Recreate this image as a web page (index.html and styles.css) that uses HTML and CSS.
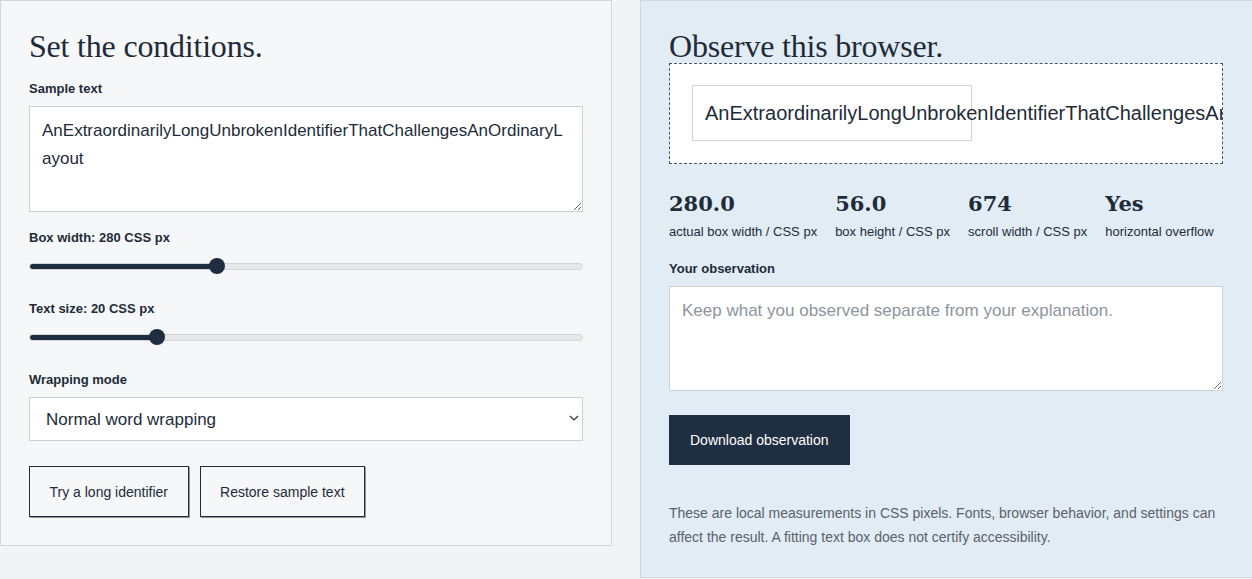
FILE: index.html
```html
<!DOCTYPE html>
<html lang="en">
<head>
    <meta charset="UTF-8">
    <meta name="viewport" content="width=device-width, initial-scale=1.0">
    <title>Text Box Overflow Lab</title>
    <link rel="stylesheet" href="styles.css">
</head>
<body>

    <div class="layout">
        <!-- Controls -->
        <section class="panel controls">
            <h2>Set the conditions.</h2>

            <label class="field-label" for="sample-text">Sample text</label>
            <textarea id="sample-text" class="sample-text">AnExtraordinarilyLongUnbrokenIdentifierThatChallengesAnOrdinaryLayout</textarea>

            <label class="field-label spaced" for="box-width">Box width: 280 CSS px</label>
            <input type="range" id="box-width" class="range" min="160" max="520" value="280" style="--fill: 187px">

            <label class="field-label spaced" for="text-size">Text size: 20 CSS px</label>
            <input type="range" id="text-size" class="range" min="12" max="48" value="20" style="--fill: 128px">

            <label class="field-label spaced" for="wrap-mode">Wrapping mode</label>
            <div class="select-wrap">
                <select id="wrap-mode" class="select">
                    <option>Normal word wrapping</option>
                    <option>Break long words</option>
                    <option>No wrapping</option>
                </select>
                <svg class="chevron" width="10" height="6" viewBox="0 0 10 6">
                    <path d="M1 1l4 4 4-4" fill="none" stroke="#333" stroke-width="1.2"/>
                </svg>
            </div>

            <div class="button-row">
                <button class="outline-btn">Try a long identifier</button>
                <button class="outline-btn">Restore sample text</button>
            </div>
        </section>

        <!-- Results -->
        <section class="panel results">
            <h2>Observe this browser.</h2>

            <div class="stage">
                <div class="test-box">AnExtraordinarilyLongUnbrokenIdentifierThatChallengesAnOrdinaryLayout</div>
            </div>

            <div class="metrics">
                <div class="metric">
                    <div class="metric-value">280.0</div>
                    <div class="metric-label">actual box width / CSS px</div>
                </div>
                <div class="metric">
                    <div class="metric-value">56.0</div>
                    <div class="metric-label">box height / CSS px</div>
                </div>
                <div class="metric">
                    <div class="metric-value">674</div>
                    <div class="metric-label">scroll width / CSS px</div>
                </div>
                <div class="metric">
                    <div class="metric-value">Yes</div>
                    <div class="metric-label">horizontal overflow</div>
                </div>
            </div>

            <label class="field-label obs-label" for="observation">Your observation</label>
            <textarea id="observation" class="observation" placeholder="Keep what you observed separate from your explanation."></textarea>

            <button class="dark-btn">Download observation</button>

            <p class="note">These are local measurements in CSS pixels. Fonts, browser behavior, and settings can affect the result. A fitting text box does not certify accessibility.</p>
        </section>
    </div>

</body>
</html>
```

FILE: styles.css
```css
body {
    margin: 0;
    font-family: "Liberation Sans", Arial, sans-serif;
    color: #1e2b38;
    background-color: #f1f4f6;
    overflow: hidden;
}

.layout {
    display: grid;
    grid-template-columns: 612px 620px;
    column-gap: 28px;
    align-items: start;
}

.panel {
    display: flex;
    flex-direction: column;
    align-items: flex-start;
    padding: 28px;
    border: 1px solid #d2d7d9;
}

.controls {
    background-color: #f5f7f9;
}

.results {
    background-color: #e2ecf5;
    border-right: none;
}

h2 {
    margin: 0;
    font-family: Georgia, "Liberation Serif", serif;
    font-size: 32px;
    line-height: 34px;
    font-weight: normal;
    letter-spacing: -0.2px;
    color: #1e2b38;
}

.controls h2 {
    margin-bottom: 18px;
}

.field-label {
    display: block;
    font-size: 13px;
    line-height: 16px;
    font-weight: bold;
    margin-bottom: 9px;
}

.field-label.spaced {
    margin-top: 18px;
}

.sample-text,
.observation {
    box-sizing: border-box;
    width: 554px;
    margin: 0;
    padding: 10px 12px;
    font-family: "Liberation Sans", Arial, sans-serif;
    font-size: 17px;
    line-height: 28px;
    color: #1e2b38;
    background-color: #fff;
    border: 1px solid #cdd1d4;
    border-radius: 0;
}

.sample-text {
    height: 106px;
}

.observation {
    height: 105px;
    padding-top: 12px;
    line-height: 24px;
}

.observation::placeholder {
    color: #8c959e;
}

.range {
    -webkit-appearance: none;
    appearance: none;
    width: 554px;
    height: 22px;
    margin: 0 0 6px;
    background: transparent;
}

.range::-webkit-slider-runnable-track {
    height: 7px;
    border-radius: 4px;
    box-sizing: border-box;
    border: 1px solid #d3d6d9;
    background: linear-gradient(to right, #1e2d3f var(--fill), #e6e8ea var(--fill));
}

.range::-webkit-slider-thumb {
    -webkit-appearance: none;
    width: 16px;
    height: 16px;
    margin-top: -5.5px;
    border-radius: 50%;
    background-color: #1e2d3f;
    border: none;
}

.select-wrap {
    position: relative;
}

.select {
    -webkit-appearance: none;
    appearance: none;
    box-sizing: border-box;
    width: 554px;
    height: 44px;
    padding: 0 16px;
    font-family: "Liberation Sans", Arial, sans-serif;
    font-size: 17px;
    color: #1e2b38;
    background-color: #fff;
    border: 1px solid #cdd1d4;
    border-radius: 0;
}

.chevron {
    position: absolute;
    right: 4px;
    top: 18px;
    pointer-events: none;
}

.button-row {
    display: flex;
    gap: 11px;
    margin-top: 25px;
}

.outline-btn {
    height: 51px;
    padding: 0 19.5px;
    font-family: "Liberation Sans", Arial, sans-serif;
    font-size: 14px;
    color: #1e2b38;
    background-color: transparent;
    border: 1px solid #1e2d3f;
    box-shadow: 1px 1px 0 #8d949b;
    border-radius: 0;
    cursor: pointer;
}

.stage {
    box-sizing: border-box;
    width: 554px;
    padding: 21px 22px 22px;
    background-color: #fff;
    border: 1px dashed #4a5560;
    overflow: hidden;
}

.test-box {
    box-sizing: border-box;
    width: 280px;
    height: 56px;
    padding: 12px;
    font-size: 20px;
    line-height: 30px;
    border: 1px solid #d3d3cf;
    white-space: nowrap;
}

.metrics {
    display: flex;
    gap: 18px;
    margin-top: 25px;
}

.metric-value {
    font-family: "DejaVu Serif", Georgia, serif;
    font-size: 21px;
    line-height: 30px;
    font-weight: bold;
}

.metric-label {
    margin-top: 4px;
    font-size: 13px;
    line-height: 18px;
}

.obs-label {
    margin-top: 20px;
}

.dark-btn {
    height: 50px;
    margin-top: 24px;
    padding: 0 21px;
    font-family: "Liberation Sans", Arial, sans-serif;
    font-size: 14px;
    color: #fff;
    background-color: #1f2e40;
    border: none;
    border-radius: 0;
    cursor: pointer;
}

.note {
    margin: 36px 0 0;
    width: 554px;
    font-size: 14px;
    line-height: 24px;
    color: #59616a;
}
```
